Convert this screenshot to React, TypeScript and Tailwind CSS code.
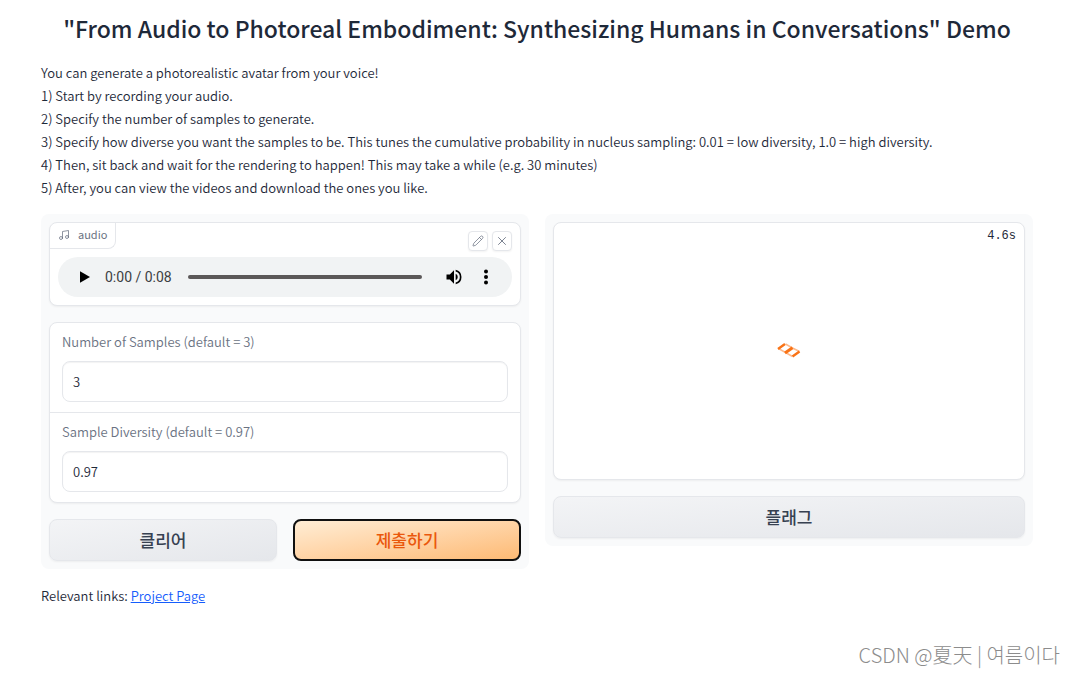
import { useState } from 'react';
import type { ReactNode } from 'react';
import { Music, Pencil, X } from 'lucide-react';
import { clsx } from 'clsx';

const steps = [
  'You can generate a photorealistic avatar from your voice!',
  '1) Start by recording your audio.',
  '2) Specify the number of samples to generate.',
  '3) Specify how diverse you want the samples to be. This tunes the cumulative probability in nucleus sampling: 0.01 = low diversity, 1.0 = high diversity.',
  '4) Then, sit back and wait for the rendering to happen! This may take a while (e.g. 30 minutes)',
  '5) After, you can view the videos and download the ones you like.',
];

function IconButton({ label, children }: { label: string; children: ReactNode }) {
  return (
    <button
      aria-label={label}
      className="flex size-5 items-center justify-center rounded border border-gray-200 bg-white text-gray-500 shadow-xs"
    >
      {children}
    </button>
  );
}

function AudioPlayer() {
  const [position, setPosition] = useState('0');

  return (
    <div className="flex h-10 items-center rounded-full bg-[#f1f3f4] pr-3.5 pl-[15px] text-black">
      <button aria-label="Play" className="flex size-6 shrink-0 items-center justify-center">
        <svg viewBox="0 0 24 24" className="size-5" fill="currentColor">
          <path d="M6 5v14l12-7z" />
        </svg>
      </button>
      <span className="ml-2 shrink-0 font-[Roboto] text-sm font-normal text-[#3c4043]">0:00 / 0:08</span>
      <input
        type="range"
        aria-label="Seek"
        min="0"
        max="8"
        value={position}
        onChange={(e) => setPosition(e.target.value)}
        className="mr-5 ml-4 h-1 min-w-0 flex-1 appearance-none rounded-full bg-[#5b5858] [&::-webkit-slider-thumb]:opacity-0"
      />
      <button aria-label="Mute" className="flex size-6 shrink-0 items-center justify-center">
        <svg viewBox="0 0 24 24" className="size-5" fill="currentColor">
          <path d="M3 9v6h4l5 5V4L7 9H3zm13.5 3A4.5 4.5 0 0 0 14 7.97v8.05A4.47 4.47 0 0 0 16.5 12zM14 3.23v2.06a7 7 0 0 1 0 13.42v2.06a9 9 0 0 0 0-17.54z" />
        </svg>
      </button>
      <button aria-label="More options" className="ml-2 flex size-6 shrink-0 items-center justify-center">
        <svg viewBox="0 0 24 24" className="size-5" fill="currentColor">
          <circle cx="12" cy="5.5" r="2.4" />
          <circle cx="12" cy="12" r="2.4" />
          <circle cx="12" cy="18.5" r="2.4" />
        </svg>
      </button>
    </div>
  );
}

function Field({ id, label, initial }: { id: string; label: string; initial: string }) {
  const [value, setValue] = useState(initial);

  return (
    <div className="px-3 pt-2 pb-2.5">
      <label htmlFor={id} className="mb-2 block text-[13px] leading-[22px] text-gray-500">
        {label}
      </label>
      <input
        id={id}
        type="text"
        value={value}
        onChange={(e) => setValue(e.target.value)}
        className="block h-[41px] w-full rounded-lg border border-gray-200 bg-white px-2.5 text-[13px] text-gray-800 inset-shadow-xs"
      />
    </div>
  );
}

function ActionButton({ primary, children }: { primary?: boolean; children: ReactNode }) {
  return (
    <button
      className={clsx(
        'h-[42px] rounded-lg bg-linear-to-br text-[17px] font-medium',
        primary
          ? 'border-2 border-[#101010] from-[#ffedd5] to-[#fdba74] text-[#ea580c]'
          : 'border border-gray-200 from-[#f3f4f6] to-[#e5e7eb] text-[#374151] shadow-xs'
      )}
    >
      {children}
    </button>
  );
}

function Loader() {
  return (
    <svg viewBox="0 0 24 16" className="h-4 w-6" fill="none">
      <g stroke="#fdba8c" strokeWidth="1.5">
        <path d="M1.5 5.5 8.5 9.5 15.5 13.5M8.5 1 15.5 5 22.5 8.5" />
      </g>
      <g stroke="#f97316" strokeWidth="2.4">
        <path d="M1 6 8 1M15.5 13.5 22.5 8.5" />
      </g>
      <path d="M8 10 15.5 4.8" stroke="#f97316" strokeWidth="3" />
    </svg>
  );
}

export default function App() {
  return (
    <main className="relative min-h-screen bg-white px-[41px] pt-2.5 font-['Noto_Sans_CJK_KR',sans-serif] text-[13px] font-[350] text-gray-800">
      <h1 className="text-center text-[23px] leading-9 font-medium">
        "From Audio to Photoreal Embodiment: Synthesizing Humans in Conversations" Demo
      </h1>

      <div className="mt-[15px] leading-[23px]">
        {steps.map((step) => (
          <p key={step}>{step}</p>
        ))}
      </div>

      <div className="mt-[15px] grid grid-cols-2 items-start gap-4">
        <section className="flex flex-col gap-4 rounded-lg bg-[#f9fafb] p-2">
          <div className="rounded-lg border border-gray-200 bg-white pb-2 shadow-xs">
            <div className="flex h-[34px] items-start justify-between pr-2">
              <div className="flex h-[26px] items-center gap-2 rounded-br-lg border-r border-b border-gray-200 px-2 pb-0.5 text-[11px] font-normal text-gray-500">
                <Music className="size-3" strokeWidth={1.5} />
                audio
              </div>
              <div className="mt-2 flex gap-1">
                <IconButton label="Edit">
                  <Pencil className="size-3" strokeWidth={1.5} />
                </IconButton>
                <IconButton label="Clear audio">
                  <X className="size-3.5" strokeWidth={1.5} />
                </IconButton>
              </div>
            </div>
            <div className="px-2">
              <AudioPlayer />
            </div>
          </div>

          <div className="divide-y divide-gray-200 rounded-lg border border-gray-200 bg-white shadow-xs">
            <Field id="samples" label="Number of Samples (default = 3)" initial="3" />
            <Field id="diversity" label="Sample Diversity (default = 0.97)" initial="0.97" />
          </div>

          <div className="grid grid-cols-2 gap-4">
            <ActionButton>클리어</ActionButton>
            <ActionButton primary>제출하기</ActionButton>
          </div>
        </section>

        <section className="flex flex-col gap-4 rounded-lg bg-[#f9fafb] p-2">
          <div className="relative flex h-[258px] items-center justify-center rounded-lg border border-gray-200 bg-white shadow-xs">
            <span className="absolute top-1 right-2 font-['Liberation_Mono',monospace] text-xs leading-[18px]">
              4.6s
            </span>
            <Loader />
          </div>
          <ActionButton>플래그</ActionButton>
        </section>
      </div>

      <p className="mt-[15px] leading-[23px]">
        Relevant links:{' '}
        <a href="#project" className="text-blue-600 underline">
          Project Page
        </a>
      </p>

      <div className="absolute right-3.5 bottom-1.5 text-xl leading-7 font-light text-[#8c8c8c]">
        CSDN @夏天 | 여름이다
      </div>
    </main>
  );
}
